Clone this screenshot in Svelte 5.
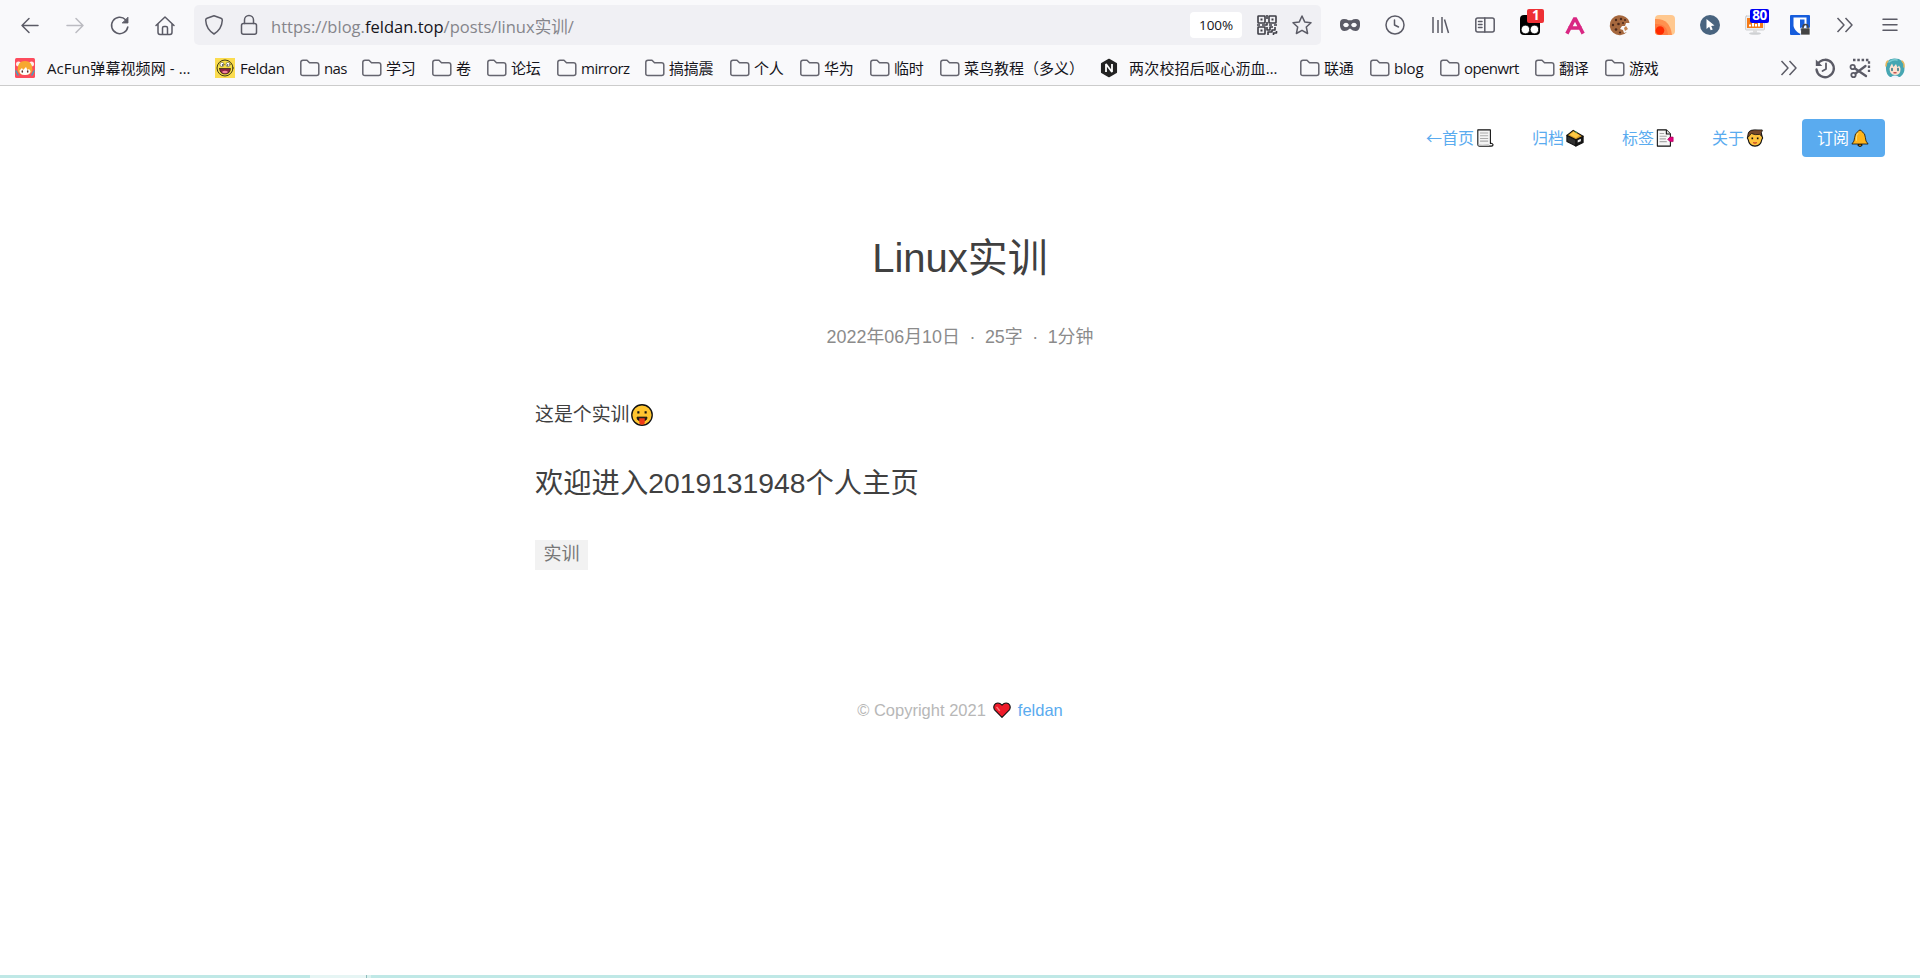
<script>
  const bookmarks = [
    { icon: 'acfun', text: 'AcFun弹幕视频网 - …', left: 47, x: 15, sp: 0.1 },
    { icon: 'smile', text: 'Feldan', left: 240, x: 215, sp: -0.35 },
    { text: 'nas', left: 324, x: 300, sp: -0.6 },
    { text: '学习', left: 386, x: 362 },
    { text: '卷', left: 456, x: 432 },
    { text: '论坛', left: 511, x: 487 },
    { text: 'mirrorz', left: 581, x: 557, sp: -0.5 },
    { text: '搞搞震', left: 669, x: 645 },
    { text: '个人', left: 754, x: 730 },
    { text: '华为', left: 824, x: 800 },
    { text: '临时', left: 894, x: 870 },
    { text: '菜鸟教程（多义）', left: 964, x: 940, sp: 0 },
    { icon: 'n', text: '两次校招后呕心沥血…', left: 1129, x: 1099, sp: 0.2 },
    { text: '联通', left: 1324, x: 1300 },
    { text: 'blog', left: 1394, x: 1370, sp: -0.2 },
    { text: 'openwrt', left: 1464, x: 1440, sp: -0.6 },
    { text: '翻译', left: 1559, x: 1535 },
    { text: '游戏', left: 1629, x: 1605 }
  ].map((b, i, all) => ({ ...b, width: (all[i + 1]?.x ?? 1779) - b.x, lead: b.left - b.x }));
  const extensions = ['mask', 'clock', 'library', 'sidebar', 'monkey', 'a', 'cookie', 'orange', 'cursor', 'monitor', 'warden', 'more', 'menu'];
</script>

{#snippet glyph(name)}
  <svg class="ic" viewBox="0 0 20 20" fill="none" stroke="#5b5b66" stroke-width="1.5" stroke-linecap="round" stroke-linejoin="round">
    {#if name === 'back'}<path d="M18 10.500H2M9 3.500 2 10.500l7 7" />
    {:else if name === 'forward'}<path d="M2 10.500h16M11 3.500l7 7-7 7" stroke="#bbbbc1" />
    {:else if name === 'reload'}<path d="M17.8 12a8.200 8.200 0 1 1-2.200-7.300" /><path d="M18 2.500v5.500h-5.500z" fill="#5b5b66" stroke-width=".8" />
    {:else if name === 'home'}<path d="M1 10.500 10 2l9 8.500M3 9v8.300q0 2.200 2 2.200h10q2 0 2-2.200V9M7.500 19v-6q0-1.500 1.500-1.500h2q1.500 0 1.500 1.500v6" />
    {:else if name === 'shield'}<path d="M10 .8 17 3.300q1.400.5 1.300 2-.5 9-8.300 13.700Q2.200 14.300 1.700 5.300q-.1-1.500 1.300-2z" />
    {:else if name === 'lock'}<rect x="2.500" y="8.500" width="15" height="10.700" rx="2" /><path d="M5.500 8.500V5a4.500 4.500 0 0 1 9 0v3.500" />
    {:else if name === 'qr'}<g stroke="#3d3d45" stroke-width="1.600" stroke-linecap="butt"><rect x="1" y="1" width="7" height="7" rx=".5" /><rect x="12" y="1" width="7" height="7" rx=".5" /><rect x="1" y="12" width="7" height="7" rx=".5" /><path d="M3.500 4.500h2M14.500 4.500h2M3.500 15.500h2" stroke-width="2" /><path d="M0 10h3M5 10h5V7M10 0v4M12 10h3M17 10h3M10 12v3h3v-3h3M18 12v3h-3v2h-4v3M19.500 16v2h-3v2" /></g>
    {:else if name === 'star'}<path d="m10 1 2.700 5.900 6.300.8-4.700 4.300 1.300 6.500L10 15.300 4.400 18.500 5.700 12 1 7.700l6.300-.8z" />
    {:else if name === 'folder'}<path d="M.8 15.500v-11q0-2.200 2.200-2.200h4l2.500 2.500h7q2.300 0 2.300 2.200v8.500q0 2-2.200 2H3q-2.200 0-2.200-2z" stroke="#65656f" />
    {:else if name === 'mask'}<path fill-rule="evenodd" d="M0 8q0-4 4-4 3 0 4.300 1.200h3.400Q13 4 16 4q4 0 4 4v3q-.6 5-4.500 5-2.500 0-5.500-2.500Q7 16 4.500 16 .6 16 0 11zM3 10q1-2.300 3-2.300T9 10q-1 2.300-3 2.300T3 10m8 0q1-2.300 3-2.300t3 2.300q-1 2.300-3 2.300T11 10" fill="#5b5b66" stroke="none" />
    {:else if name === 'clock'}<circle cx="10" cy="10" r="9" /><path d="M9.500 5v5l4 2" />
    {:else if name === 'library'}<path d="M3 2v16M8 5v13M12 2v16M14.500 4.500l4 13.500" stroke-linecap="butt" />
    {:else if name === 'sidebar'}<rect x=".8" y="3" width="18.400" height="14" rx="2" /><path d="M9.800 3v14M3.500 6.500h3.500M3.500 9.500h3.500M3.500 12.500h3.500" />
    {:else if name === 'monkey'}<rect x="0" y="0" width="20" height="20" rx="4" fill="#000" stroke="none" /><circle cx="5.500" cy="14.500" r="4.300" fill="#fff" stroke="#000" stroke-width=".7" /><circle cx="14.500" cy="14.500" r="4.300" fill="#fff" stroke="#000" stroke-width=".7" />
    {:else if name === 'a'}<path d="m2.700 17 7.300-14 7.300 14M5 13h10" stroke="#d92783" stroke-width="3.600" stroke-linejoin="bevel" stroke-linecap="square" />
    {:else if name === 'cookie'}<path d="M15.500 2A10 10 0 1 0 17 17l-3 1-1-3-3-1 2-3 3 0 1-3 3.500 0q-.5-4-4-6z" fill="#a6683e" stroke="none" /><g fill="#4c291b" stroke="none"><circle cx="6" cy="5" r="1.200" /><circle cx="11" cy="4" r="1.200" /><circle cx="15" cy="5" r="1" /><circle cx="3" cy="10" r="1.200" /><circle cx="8.500" cy="9" r="1.300" /><circle cx="6" cy="14.500" r="1.300" /><circle cx="10" cy="17.500" r="1.100" /><circle cx="13" cy="8" r="1" /></g><path d="m14 13 2-2 2 3-3 2z" fill="#c5824d" stroke="none" />
    {:else if name === 'orange'}<rect width="20" height="20" rx="4" fill="#ffc88f" stroke="none" /><path d="M0 4Q15 3 17 20H4q-4 0-4-4z" fill="#ff914f" stroke="none" /><path d="M0 9q12-1 13 11H4q-4 0-4-4z" fill="#ff7a40" stroke="none" /><circle cx="5" cy="15.500" r="4.300" fill="#ff2a00" stroke="none" />
    {:else if name === 'cursor'}<circle cx="10" cy="10" r="10" fill="#49647f" stroke="none" /><path d="M6.500 4v10l2.700-2.200 1.500 3.500 2-.9-1.500-3.400 3.300-.5z" fill="#fff" stroke="none" />
    {:else if name === 'monitor'}<rect x=".5" y="1" width="19" height="14" rx="1" fill="#eceef0" stroke="#c6c8ca" stroke-width=".8" /><rect x="2" y="3" width="16" height="10" fill="#f47a18" stroke="none" /><path d="M5 11.500V9.500M8 11.500V8M11 11.500V9M14 11.500V8" stroke="#fff" stroke-width="2" stroke-linecap="butt" /><path d="M8 15h4v2.500H8z" fill="#ddd" stroke="none" /><ellipse cx="10" cy="18.500" rx="6" ry="1.300" fill="#cfd1d3" stroke="none" />
    {:else if name === 'warden'}<rect width="20" height="20" rx="1" fill="#175ddc" stroke="none" /><path d="M3.500 2.500h13v8.500q-1 5-6.500 7.700Q4.500 16 3.500 11z" fill="#fff" stroke="none" /><path d="M10 4.500h4.500v6.500q-1 3-4.500 4.800z" fill="#175ddc" stroke="none" /><path d="M11 13h9v7h-9z" fill="#444" stroke="#fff" stroke-width=".7" /><path d="M13 13v-1a2.500 2.500 0 0 1 5 0v1" stroke="#444" />
    {:else if name === 'more'}<path d="m2.500 3 6.500 7-6.500 7M10.500 3l6.500 7-6.500 7" stroke-linecap="butt" />
    {:else if name === 'menu'}<path d="M3 4.200h14M3 9.700h14M3 15.200h14" />
    {:else if name === 'history'}<path d="M3 5.500a8.700 8.700 0 1 1-1.500 6" stroke-width="2.300" /><path d="M.8 1.500V8h6.500z" fill="#5b5b66" stroke="none" /><path d="M11 5.500V11l-3.500 2" stroke-width="1.800" />
    {:else if name === 'scissors'}<path d="M3 2h16v12" stroke-width="2.300" stroke-dasharray="2.500 1.800" stroke-linecap="butt" /><path d="M5 10.500 16 18M5.500 15.500 15.500 8" stroke-width="2.300" /><circle cx="2.700" cy="9" r="2.200" stroke-width="1.800" /><circle cx="3.500" cy="17" r="2.200" stroke-width="1.800" />
    {:else if name === 'avatar'}<path d="M1 11Q0 1 9 .5 19 0 19.500 10q.2 6-4.500 9H5q-4-3-4-8" fill="#46a6b2" stroke="none" /><path d="M1 8q0-4 2-5M19 9q.5-4-2-6" stroke="#e6b75c" /><path d="M4.500 10.500q1-3 2.500-5l1.500 3.500L11 6l1.500 3.500 1.500-2q1.500 2 1.500 4 0 5.500-5.500 5.500t-5.500-6.500" fill="#ffe2d1" stroke="none" /><path d="M7 10.500v2M13 10.500v2" stroke="#246e7c" /><path d="M9 14.800h2" stroke="#c35454" /><path d="M6 20q0-2.500 4-2.500t4 2.500z" fill="#eef4ff" stroke="none" /><path d="M4 4q4-3 8-2" stroke="#79cbd1" />
    {:else if name === 'acfun'}<rect width="20" height="20" rx="1.500" fill="#fd4c5d" stroke="none" /><circle cx="3.500" cy="6" r="2.500" fill="#fff0e9" stroke="none" /><circle cx="16.500" cy="6" r="2.500" fill="#fff0e9" stroke="none" /><path d="M2.500 12q0-9 7.500-9t7.500 9q-1 5-7.500 5t-7.500-5" fill="#f7a72f" stroke="none" /><path d="M4.500 12.500 7 10l1 2 3-3 1.500 3 1.500-1 1.500 2q0 4-5.500 4t-5.500-4.500" fill="#fff" stroke="none" /><path d="M7.300 13v1M12.700 13v1" stroke="#58332a" /><path d="m1 13 2 4M19 13l-2 4" stroke="#3da8bd" />
    {:else if name === 'smile'}<rect width="20" height="20" fill="#fbdc4f" stroke="none" /><circle cx="10" cy="10" r="8" fill="#f7df43" stroke="#423c15" stroke-width="1" /><path d="M4.500 10.500h11q-.5 5.500-5.500 5.500t-5.500-5.500" fill="#8a2340" stroke="#2e1c13" stroke-width=".7" /><path d="M6.800 14q3.200-2.500 6.400 0-3.200 2.600-6.400 0" fill="#f4859b" stroke="none" /><ellipse cx="7" cy="6.500" rx="2" ry="2.300" fill="#fff" stroke="#403814" stroke-width=".5" /><ellipse cx="13" cy="6.500" rx="2" ry="2.300" fill="#fff" stroke="#403814" stroke-width=".5" /><circle cx="7.500" cy="7" r=".7" fill="#111" stroke="none" /><circle cx="12.700" cy="7" r=".7" fill="#111" stroke="none" />
    {:else if name === 'n'}<path d="m10 1.500 7.300 4.200v8.600L10 18.500l-7.300-4.200V5.700z" fill="#222" stroke="#222" /><path d="M7 14V6l6 8V6" stroke="#fff" stroke-width="1.800" stroke-linecap="butt" stroke-linejoin="bevel" />
    {/if}
  </svg>
{/snippet}

{#snippet emoji(name)}
  <svg class="emoji {name}" viewBox="0 0 20 20" stroke="#111" stroke-width="1.200" stroke-linejoin="round">
    {#if name === 'page'}<path d="M2 1h14v15q2-.5 3 1.500 0 1.500-2 1.500H4q-2 0-2-2z" fill="#f4f4f4" /><path d="M4.500 4.500h9M4.500 7.500h9M4.500 10.500h9M4.500 13.500h9" stroke="#aaa" /><path d="M2 17q4 1 12 0l1 2H4q-2 0-2-2" fill="#bbb" stroke="none" />
    {:else if name === 'box'}<path d="m1 7 10 5v7L1 14z" fill="#303030" /><path d="m11 12 8-4v7l-8 4z" fill="#161616" /><path d="m1 7 7-5.500 11 6.500-8 4z" fill="#d99c27" /><path d="m4 6.500 4.500-3.500 6.500 4-4 3z" fill="#ffca46" stroke="none" /><path d="m13 12.500 3.500-1.600v2.600L13 15z" fill="#eee" stroke="none" /><path d="m10 3 2 1" stroke="#48a853" />
    {:else if name === 'tabs'}<path d="M1.500 1h10L16 5.500V19H1.500z" fill="#f6f6f6" /><path d="M4 5h5M4 8h8M4 11h7M4 14h8" stroke="#aaa" /><path d="M11.500 1v4.500H16" fill="#ddd" /><path d="m13 11.500 2.500-2.500H19v5h-3.500z" fill="#e3007f" stroke="#a8005b" stroke-width=".8" />
    {:else if name === 'man'}<path d="M2.500 7q0-5.500 7.500-5.500T17.500 7l1 3-1 2q-1 6.500-7.500 7-6.500-.5-7.500-7l-1-2z" fill="#ffc33d" /><path d="M2 8Q2 1 9 1h9q1 1-1 2.500l.5 4.500-2.500-2q-5 1-9-1L2.500 9z" fill="#75482b" stroke-width=".8" /><path d="M7 9.500v2M13 9.500v2" stroke-width="1.800" /><path d="M8 15q2 1.300 4 0" stroke="#c63b22" fill="none" />
    {:else if name === 'bell'}<path d="M8 16.500h4v2q-2 1.500-4 0z" fill="#e38d00" /><path d="M10 1.200q1.500 0 2 1.500 4 2 4 7 0 4 3 7H1q3-3 3-7 0-5 4-7 .5-1.500 2-1.500" fill="#ffb51b" stroke-width=".9" /><path d="M6 13V9q0-3 2-4.500" stroke="#ffdb70" fill="none" />
    {:else if name === 'tongue'}<circle cx="10" cy="10" r="9.300" fill="#ffc52f" /><path d="M6.700 6.500v2.200M13.300 6.500v2.200" stroke-width="1.900" /><path d="M5.500 12h9q0 3.500-4.500 3.500T5.500 12" fill="#291b16" stroke-width=".9" /><path d="M7.500 13h5v3.500q0 2.300-2.500 2.300t-2.500-2.300z" fill="#ef3b18" stroke="none" />
    {:else}<path d="M10 18.200 1.500 9.500Q-.3 5.500 2.800 3 6.500.8 10 4.700 13.500.8 17.200 3q3.100 2.500 1.300 6.500z" fill="#ee1b2a" /><path d="M4 6.500 7.500 11" stroke="#ff7b7b" stroke-width="1.700" />
    {/if}
  </svg>
{/snippet}

<div class="window">
  <header>
    <div class="toolbar">
      <div class="history">
        {#each ['back', 'forward', 'reload', 'home'] as n}<button class="slot">{@render glyph(n)}</button>{/each}
      </div>
      <div class="url">
        {@render glyph('shield')}{@render glyph('lock')}
        <div class="address">https://blog.<b>feldan.top</b>/posts/linux实训/</div>
        <span class="zoomlevel">100%</span>
        {@render glyph('qr')}{@render glyph('star')}
      </div>
      <div class="extensions">
        {#each extensions as n}
          <button class="slot">{@render glyph(n)}{#if n === 'monkey'}<i class="badge red">1</i>{:else if n === 'monitor'}<i class="badge blue">80</i>{/if}</button>
        {/each}
      </div>
    </div>
    <div class="bookmarks">
      {#each bookmarks as b}
        <div class="bookmark" style:width="{b.width}px">
          <span class="lead" style:width="{b.lead}px">{@render glyph(b.icon ?? 'folder')}</span>
          <span style:letter-spacing="{b.sp ?? -0.2}px">{b.text}</span>
        </div>
      {/each}
      <div class="tools">{@render glyph('more')}{@render glyph('history')}{@render glyph('scissors')}{@render glyph('avatar')}</div>
    </div>
  </header>
  <nav>
    <span class="link"><span class="arrow">←</span>首页{@render emoji('page')}</span>
    <span class="link">归档{@render emoji('box')}</span>
    <span class="link">标签{@render emoji('tabs')}</span>
    <span class="link">关于{@render emoji('man')}</span>
    <span class="link subscribe">订阅{@render emoji('bell')}</span>
  </nav>
  <main>
    <h1>Linux实训</h1>
    <div class="meta"><span>2022年06月10日</span><i>·</i><span>25字</span><i>·</i><span>1分钟</span></div>
    <article>
      <p>这是个实训{@render emoji('tongue')}</p>
      <h2>欢迎进入2019131948个人主页</h2>
      <span class="tag">实训</span>
    </article>
  </main>
  <footer>© Copyright 2021 {@render emoji('heart')} <span>feldan</span></footer>
  <div class="strip"><span></span><b></b></div>
</div>

<style>
  :global(body) { margin: 0; background: #fff; }
  .window { height: 978px; display: flex; flex-direction: column; overflow: hidden; font-family: "Liberation Sans", "Noto Sans CJK SC", sans-serif; color: #404040; }
  header { height: 85px; flex: none; border-bottom: 1px solid #ccc; background: #f9f9fb; color: #15141a; font-family: "Open Sans", "Noto Sans CJK SC", sans-serif; }
  .ic { width: 20px; height: 20px; display: block; flex: none; overflow: visible; }
  .toolbar { height: 50px; display: flex; align-items: center; }
  .history, .extensions { display: flex; }
  .history { padding-left: 7px; width: 187px; }
  .extensions { padding-left: 6px; }
  .slot { position: relative; width: 45px; height: 40px; padding: 0; border: 0; background: none; display: grid; place-items: center; font-family: inherit; }
  .badge { position: absolute; top: 4px; left: 20px; height: 14px; min-width: 17px; line-height: 13px; border-radius: 2px; color: #fff; font-size: 13.500px; font-weight: 700; font-style: normal; text-align: center; letter-spacing: -0.500px; }
  .red { background: #ee3035; }
  .blue { left: 18px; background: #0000f5; min-width: 19px; }
  .url { box-sizing: border-box; width: 1127px; height: 40px; padding: 0 9px 0 10px; border-radius: 5px; background: #f0f0f4; display: flex; align-items: center; }
  .url > :global(.ic + .ic) { margin-left: 15px; }
  .address { flex: 1; margin-left: 12px; padding-top: 2px; color: #85858b; font-size: 16.500px; letter-spacing: 0.010px; white-space: nowrap; }
  .address b { font-weight: 400; color: #15141a; }
  .zoomlevel { width: 52px; height: 26px; margin-right: 15px; line-height: 27px; text-align: center; border-radius: 4px; background: #fff; font-size: 13.500px; letter-spacing: -0.100px; }
  .bookmarks { display: flex; height: 35px; padding-left: 15px; align-items: center; font-size: 15px; }
  .bookmark { display: flex; align-items: center; white-space: nowrap; line-height: 20px; }
  .lead { flex: none; }
  .tools { display: flex; gap: 15px; }
  .tools > :global(:first-child) { margin-right: 1px; }
  nav { display: flex; justify-content: flex-end; align-items: center; height: 38px; padding: 33px 35px 0 0; font-size: 16px; color: #5aabef; }
  .link { display: flex; align-items: center; height: 36px; padding-bottom: 2px; margin-right: 38px; white-space: nowrap; }
  .link :global(.emoji) { margin-top: 1px; }
  .arrow { font-family: "Noto Sans CJK SC", sans-serif; line-height: 20px; }
  .subscribe { box-sizing: border-box; width: 83px; height: 38px; margin: 0; padding-left: 15px; color: #fff; background: #5aabef; border-radius: 4px; }
  .emoji { width: 18px; height: 18px; margin-left: 2px; flex: none; }
  main { display: flex; flex-direction: column; align-items: center; }
  h1 { margin: 71px 0 0; font-weight: 400; font-size: 40px; line-height: 60px; }
  .meta { display: flex; margin-top: 34px; font-size: 17.900px; line-height: 30px; color: #8b8b8b; }
  .meta i { width: 25px; text-align: center; font-style: normal; }
  article { width: 850px; margin-top: 47px; }
  p { display: flex; align-items: center; margin: 0; font-size: 18.900px; line-height: 32px; }
  .tongue { width: 22px; height: 22px; }
  h2 { margin: 32px 0 0; font-weight: 400; font-size: 28.300px; line-height: 40px; }
  .tag { display: block; width: 53px; height: 30px; margin-top: 37px; line-height: 29px; text-align: center; font-size: 18px; color: #777; background: #f2f2f2; }
  footer { display: flex; justify-content: center; align-items: center; height: 30px; margin-top: 125px; font-size: 16.500px; color: #b7b7b7; }
  .heart { margin: 0 7px; }
  footer span { color: #5aabef; }
  .strip { display: flex; height: 3px; margin-top: auto; padding-left: 310px; background: #bfe8e6; }
  .strip span { width: 56px; background: #e6f5f4; border-right: 1px solid #8fbcbc; }
  .strip b { width: 4px; background: #d8f0ee; }
</style>
